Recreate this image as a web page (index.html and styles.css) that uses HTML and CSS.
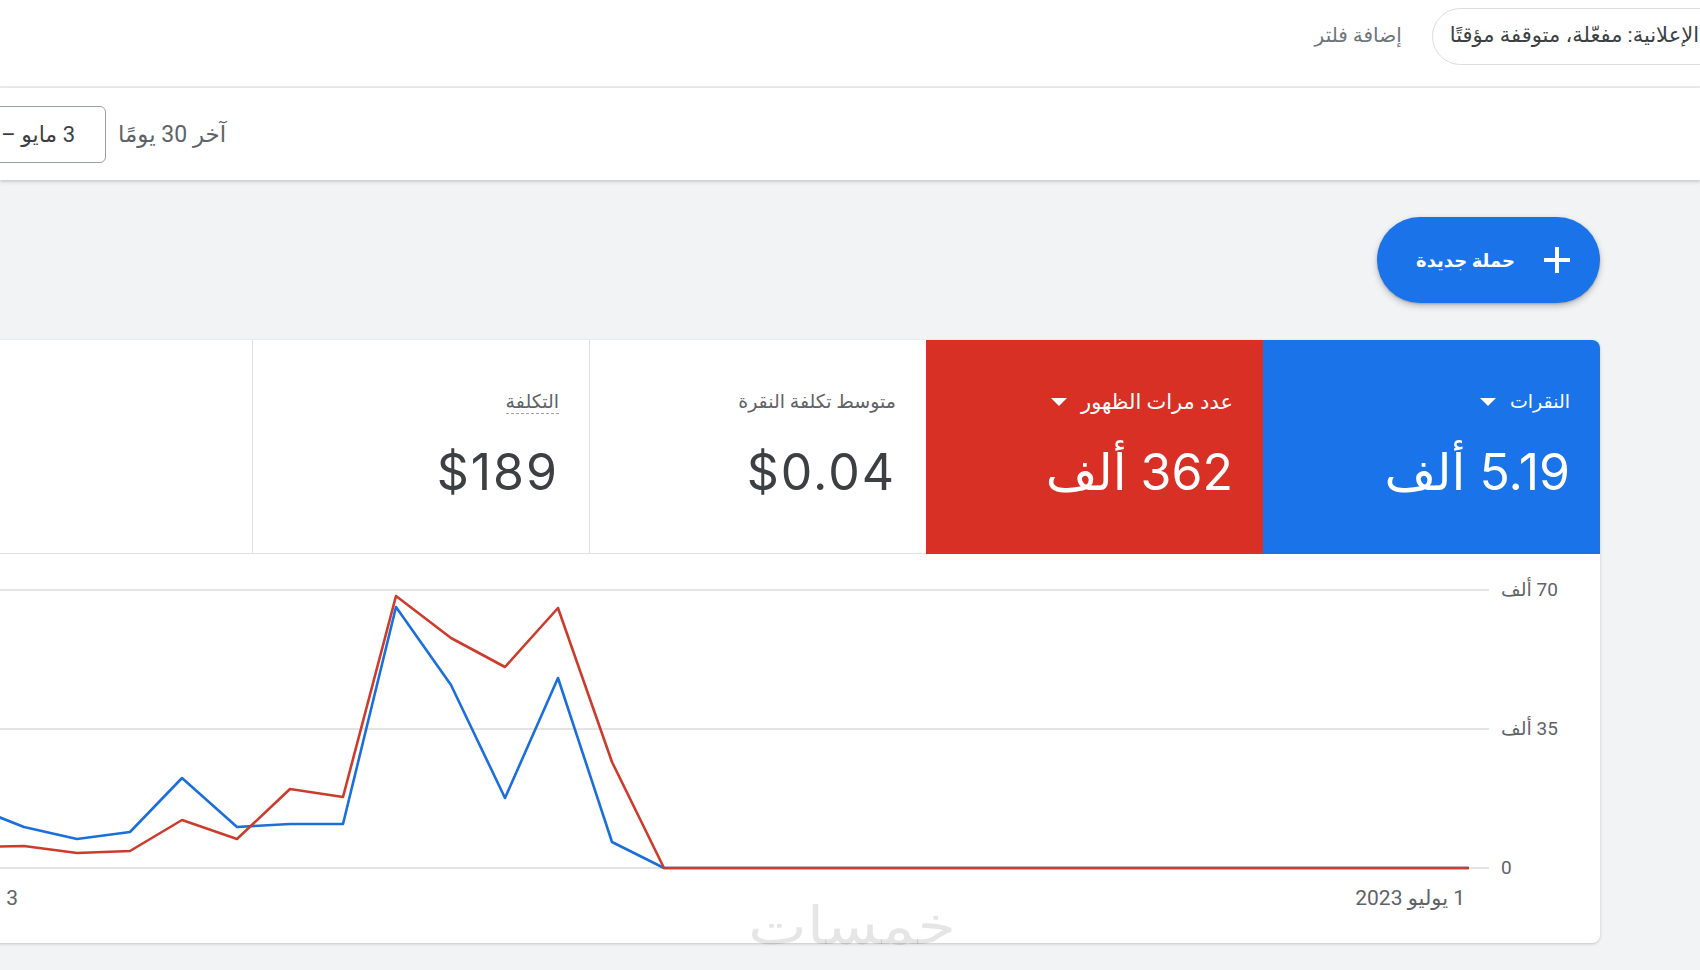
FILE: index.html
```html
<!DOCTYPE html>
<html lang="ar" dir="rtl">
<head>
<meta charset="utf-8">
<title>الحملات</title>
<link rel="stylesheet" href="styles.css">
</head>
<body>
<header class="filterbar">
  <div class="chip">الإعلانية: مفعّلة، متوقفة مؤقتًا</div>
  <span class="add-filter">إضافة فلتر</span>
</header>
<div class="datebar">
  <span class="range-label">آخر 30 يومًا</span>
  <div class="date-box">3 مايو – 1 يوليو 2023</div>
</div>
<main class="content">
  <button class="new-campaign" type="button">
    <svg class="plus" width="30" height="30" viewBox="0 0 30 30"><path d="M15 2v26M2 15h26" stroke="#fff" stroke-width="4" fill="none"/></svg>
    <span>حملة جديدة</span>
  </button>
  <section class="card">
    <div class="tiles">
      <div class="tile tile-blue">
        <div class="tile-label"><span>النقرات</span><i class="caret"></i></div>
        <div class="tile-value">5.19 ألف</div>
      </div>
      <div class="tile tile-red">
        <div class="tile-label"><span>عدد مرات الظهور</span><i class="caret"></i></div>
        <div class="tile-value">362 ألف</div>
      </div>
      <div class="tile tile-white">
        <div class="tile-label"><span>متوسط تكلفة النقرة</span></div>
        <div class="tile-value">$0.04</div>
      </div>
      <div class="tile tile-white">
        <div class="tile-label"><span class="dotted">التكلفة</span></div>
        <div class="tile-value">$189</div>
      </div>
      <div class="tile tile-empty"></div>
    </div>
    <div class="chart">
      <svg class="plot" width="1700" height="389" viewBox="0 0 1700 389">
        <g stroke="#e3e3e3" stroke-width="2">
          <line x1="0" y1="36" x2="1589" y2="36"/>
          <line x1="0" y1="175" x2="1589" y2="175"/>
          <line x1="0" y1="314" x2="1589" y2="314"/>
        </g>
        <polyline fill="none" stroke="#1a6fdc" stroke-width="2.6" stroke-linejoin="round"
          points="18,240 71,252 124,273 177,285 230,278 282,224 337,273 390,270 443,270 496,53 551,131 605,244 658,124 712,288 764,314 1569,314"/>
        <polyline fill="none" stroke="#cc3b2c" stroke-width="2.6" stroke-linejoin="round"
          points="18,292 71,293 124,292 177,299 230,297 282,266 337,285 390,235 443,243 496,42 551,84 605,113 658,54 712,208 764,314 1569,314"/>
      </svg>
      <span class="y-label y70">70 ألف</span>
      <span class="y-label y35">35 ألف</span>
      <span class="y-label y0">0</span>
      <span class="x-label x-end">1 يوليو 2023</span>
      <span class="x-label x-start">3 مايو 2023</span>
    </div>
  </section>
</main>
<div class="watermark">خمسات</div>
</body>
</html>
```
FILE: styles.css
```css
* { box-sizing: border-box; margin: 0; padding: 0; }
html, body { width: 1700px; height: 970px; overflow: hidden; }
body {
  background: #f1f3f4;
  font-family: Roboto, "DejaVu Sans", sans-serif;
  color: #3c4043;
  direction: rtl;
  position: relative;
}

.filterbar {
  height: 88px;
  background: #fff;
  border-bottom: 2px solid #e8eaed;
  display: flex;
  align-items: flex-start;
  gap: 30px;
  padding-top: 8px;
}
.chip {
  flex: none;
  height: 57px;
  border: 1px solid #dadce0;
  border-radius: 29px;
  padding: 0 30px 0 17px;
  margin-right: -30px;
  line-height: 53px;
  font-size: 21px;
  color: #3c4043;
  white-space: nowrap;
}
.add-filter {
  line-height: 55px;
  font-size: 20px;
  color: #70757a;
  white-space: nowrap;
}

.datebar {
  height: 92px;
  background: #fff;
  box-shadow: 0 2px 3px rgba(60, 64, 67, 0.22);
  display: flex;
  justify-content: flex-end;
  align-items: center;
  gap: 12px;
  position: relative;
  z-index: 1;
}
.range-label { font-size: 23px; color: #5f6368; white-space: nowrap; }
.date-box {
  flex: none;
  width: 300px;
  margin-left: -194px;
  height: 57px;
  border: 1px solid #9aa0a6;
  border-radius: 6px;
  padding-right: 30px;
  line-height: 55px;
  font-size: 22px;
  color: #3c4043;
  white-space: nowrap;
  overflow: hidden;
}

.content { padding: 37px 100px 0 0; }
.new-campaign {
  display: flex;
  align-items: center;
  gap: 27px;
  width: 223px;
  height: 86px;
  border: none;
  border-radius: 43px;
  background: #1a73e8;
  color: #fff;
  padding: 0 28px 0 0;
  font-family: Roboto, "DejaVu Sans", sans-serif;
  font-size: 18px;
  font-weight: 600;
  box-shadow: 0 3px 6px rgba(60, 64, 67, 0.3), 0 1px 2px rgba(60, 64, 67, 0.25);
}
.plus { flex: none; }

.card {
  margin-top: 37px;
  width: 1700px;
  background: #fff;
  border-radius: 8px;
  overflow: hidden;
  box-shadow: 0 1px 3px rgba(60, 64, 67, 0.25);
}
.tiles { display: flex; height: 214px; }
.tile {
  flex: none;
  width: 337px;
  padding: 50px 30px 0;
  border-bottom: 1px solid #e0e0e0;
}
.tile-blue { background: #1a73e8; color: #fff; border-bottom-color: #1a73e8; }
.tile-red { background: #d93025; color: #fff; border-bottom-color: #d93025; }
.tile-white { border-left: 1px solid #e0e0e0; color: #3c4043; }
.tile-empty { width: 400px; }
.tile-label {
  display: flex;
  align-items: center;
  gap: 14px;
  height: 24px;
  font-size: 19px;
  line-height: 24px;
  white-space: nowrap;
}
.tile-red .tile-label { font-size: 21px; }
.tile-white .tile-label { color: #5f6368; }
.dotted { border-bottom: 1px dashed #9aa0a6; line-height: 22px; }
.caret {
  width: 0; height: 0;
  border-left: 8px solid transparent;
  border-right: 8px solid transparent;
  border-top: 8px solid currentColor;
}
.tile-value {
  margin-top: 28px;
  font-family: Inter, "DejaVu Sans", sans-serif;
  font-size: 50px;
  line-height: 60px;
  white-space: nowrap;
}
.tile-white .tile-value { letter-spacing: 2px; }

.chart { position: relative; height: 389px; }
.plot { position: absolute; left: 0; top: 0; }
.y-label, .x-label {
  position: absolute;
  font-size: 19px;
  line-height: 24px;
  color: #5f6368;
  white-space: nowrap;
}
.y-label { left: 1601px; }
.y70 { top: 24px; }
.y35 { top: 163px; }
.y0 { top: 302px; }
.x-label { top: 332px; font-size: 21px; }
.x-end { right: 135px; }
.x-start { right: 1582px; }

.watermark {
  position: absolute;
  left: 748px;
  top: 896px;
  font-family: "DejaVu Sans", sans-serif;
  font-size: 52px;
  line-height: 60px;
  color: rgba(0, 0, 0, 0.1);
  white-space: nowrap;
  transform: scaleX(1.2);
  transform-origin: left center;
}
```
